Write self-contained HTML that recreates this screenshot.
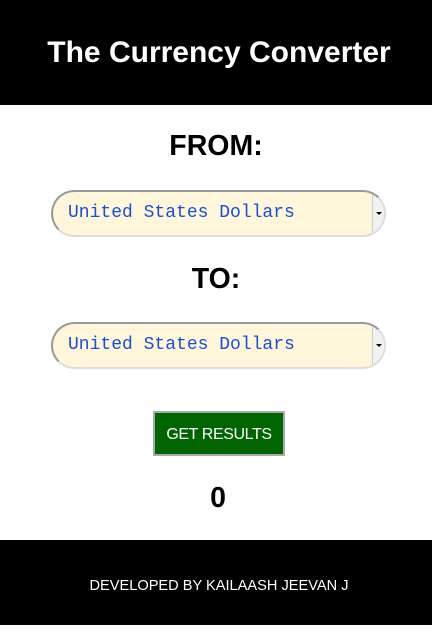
<!DOCTYPE html>
<html><head><style>
body{margin:0;width:432px;height:625px;position:relative;background:#fff;font-family:"Liberation Sans",sans-serif;overflow:hidden}
.hd{position:absolute;left:0;top:0;width:432px;height:105px;background:#000;color:#fff;font-weight:bold;font-size:30px;text-align:center;line-height:105px;text-indent:6px}
.lbl{position:absolute;left:0;width:432px;text-align:center;font-weight:bold;font-size:28.5px;color:#000}
.sel{position:absolute;left:51px;width:331px;height:43px;border:2px solid #999;border-right-color:#ddd;border-bottom-color:#ddd;border-radius:24px;background:#fff6dc;overflow:hidden}
.sel span{position:absolute;left:15px;top:11px;font-family:"Liberation Mono",monospace;font-size:18px;color:#1a4fd0}
.sel i{position:absolute;right:0;top:0;width:11px;height:43px;background:#f2f2f2;border-left:1px solid #ccc}
.sel i:after{content:"";position:absolute;left:3px;top:20px;border:3px solid transparent;border-top:3px solid #000;border-bottom:0}
.btn{position:absolute;left:153px;top:411px;width:128px;height:41px;background:#006400;border:2px solid #aaa;color:#fff;font-size:16px;letter-spacing:-0.4px;text-align:center;line-height:43px}
.ft{position:absolute;left:0;top:540px;width:432px;height:85px;background:#000;color:#fff;font-size:14.6px;text-align:center;line-height:92px;text-indent:6px}
</style></head><body>
<div class="hd">The Currency Converter</div>
<div class="lbl" style="top:130px">FROM:</div>
<div class="sel" style="top:190px"><span>United States Dollars</span><i></i></div>
<div class="lbl" style="top:263px">TO:</div>
<div class="sel" style="top:322px"><span>United States Dollars</span><i></i></div>
<div class="btn">GET RESULTS</div>
<div class="lbl" style="top:482px;text-indent:4px">0</div>
<div class="ft">DEVELOPED BY KAILAASH JEEVAN J</div>
</body></html>
